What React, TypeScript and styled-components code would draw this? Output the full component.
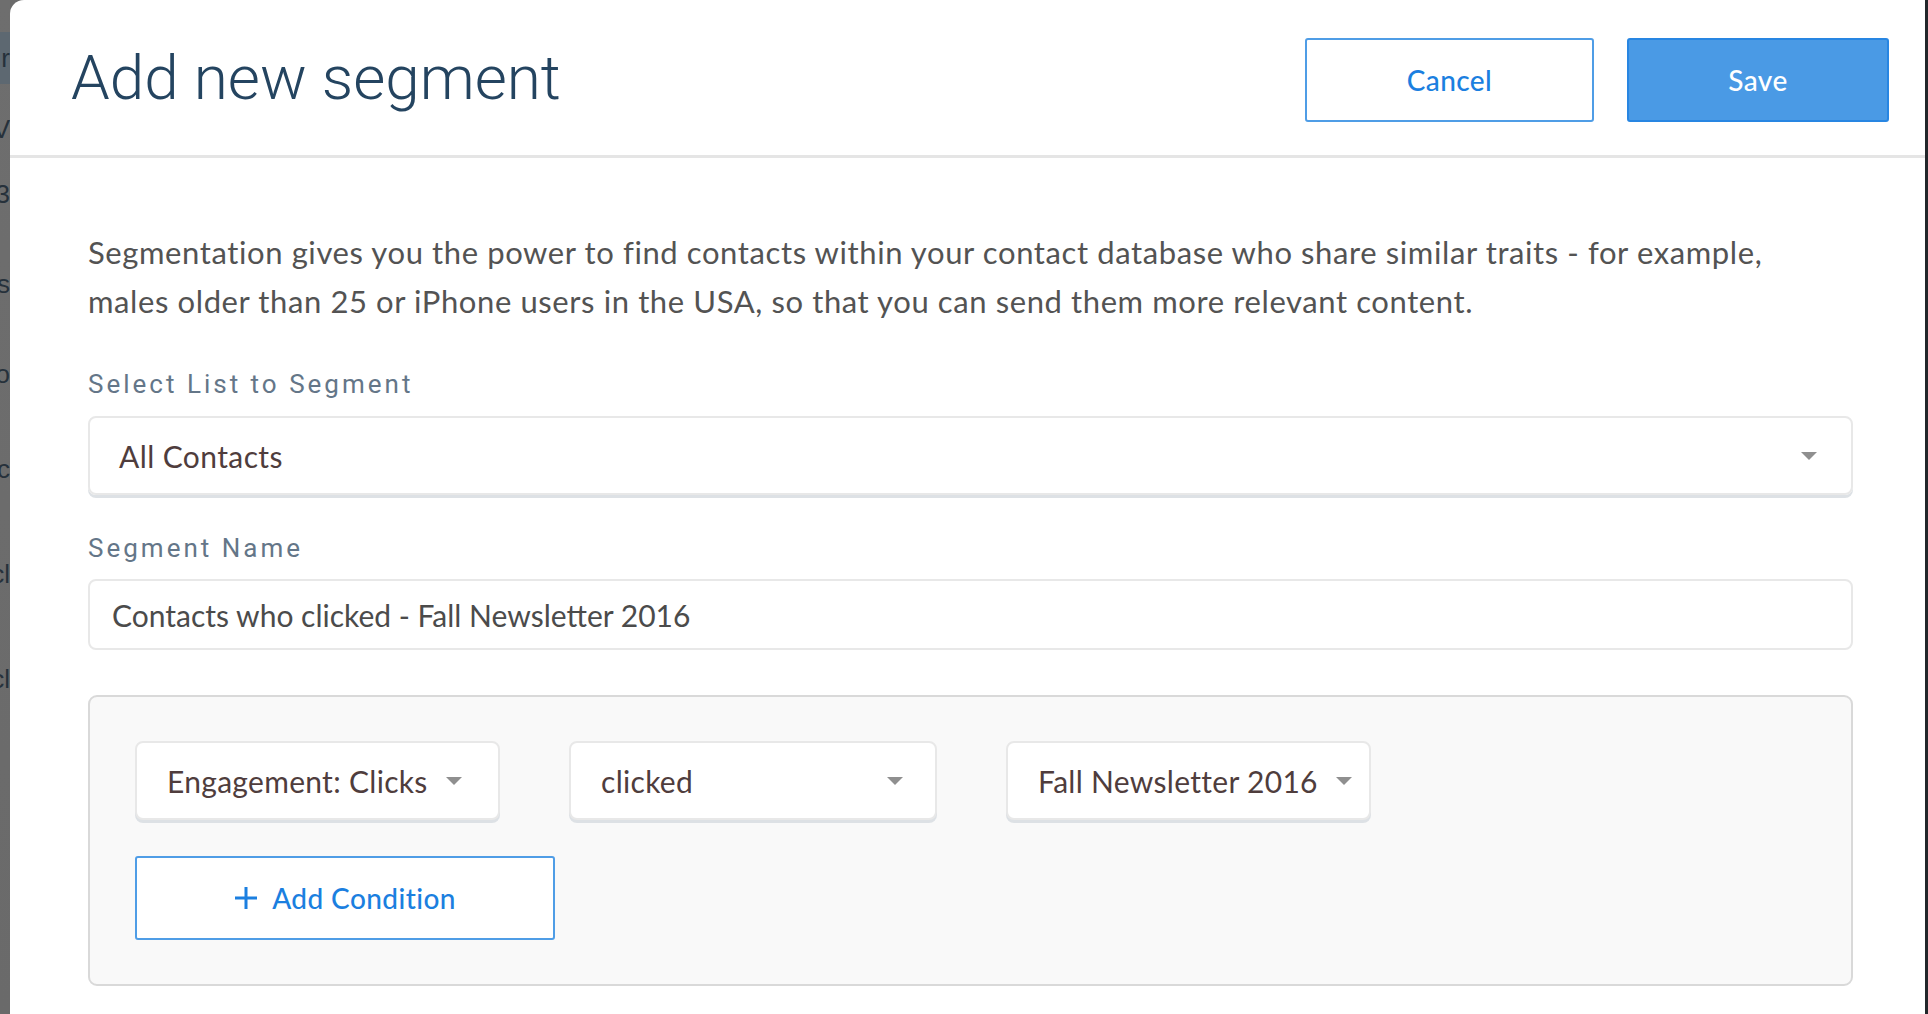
import styled, { createGlobalStyle } from "styled-components";

const GlobalStyle = createGlobalStyle`
  html, body {
    margin: 0;
    padding: 0;
    height: 1014px;
    overflow: hidden;
    background: #6b6b6b;
  }
  * {
    box-sizing: border-box;
  }
`;

const Page = styled.div`
  display: flex;
  height: 1014px;
  width: 1928px;
`;

// what shows of the page behind the modal
const Backdrop = styled.div`
  width: 10px;
  flex-shrink: 0;
  overflow: hidden;
  display: flex;
  flex-direction: column;
  background: linear-gradient(#6e6e6e, #6a6a6a);
`;

const BackdropBand = styled.div<{ $h: number; $bg?: string }>`
  height: ${(p) => p.$h}px;
  width: 100%;
  background: ${(p) => p.$bg || "transparent"};
  display: flex;
  justify-content: flex-end;
  align-items: center;
  white-space: nowrap;
  color: #26313b;
  font-family: "Liberation Sans", sans-serif;
  font-size: 26px;
`;

const Modal = styled.div`
  flex: 1;
  background: #ffffff;
  border-top-left-radius: 14px;
  border-right: 3px solid #22262a;
  display: flex;
  flex-direction: column;
`;

const Header = styled.header`
  height: 158px;
  flex-shrink: 0;
  display: flex;
  align-items: center;
  padding: 4px 36px 0 61px;
  border-bottom: 3px solid #e5e5e5;
`;

const Title = styled.h1`
  flex: 1;
  margin: 0 0 4px;
  font-family: Roboto, sans-serif;
  font-weight: 300;
  font-size: 62px;
  color: #244460;
`;

const Button = styled.button<{ $primary?: boolean; $w: number }>`
  width: ${(p) => p.$w}px;
  height: 84px;
  border-radius: 3px;
  font-family: Lato, "Open Sans", sans-serif;
  font-size: 28px;
  font-weight: 500;
  letter-spacing: 0.4px;
  border: 2px solid ${(p) => (p.$primary ? "#2886e2" : "#4f9de6")};
  background: ${(p) => (p.$primary ? "#4a9ae5" : "#ffffff")};
  color: ${(p) => (p.$primary ? "#ffffff" : "#1b7fe0")};
  display: flex;
  align-items: center;
  justify-content: center;
  gap: 14px;
  cursor: pointer;
  & + & {
    margin-left: 33px;
  }
`;

const Body = styled.div`
  padding: 70px 72px 0 78px;
  display: flex;
  flex-direction: column;
`;

const Description = styled.p`
  margin: 0;
  font-family: Lato, "Open Sans", sans-serif;
  font-size: 31px;
  line-height: 49px;
  letter-spacing: 0.6px;
  color: #535353;
`;

const Label = styled.div<{ $top: number }>`
  margin-top: ${(p) => p.$top}px;
  font-family: Roboto, sans-serif;
  font-size: 26px;
  line-height: 36px;
  letter-spacing: 3px;
  color: #647688;
`;

const SelectBox = styled.div`
  margin-top: 14px;
  height: 79px;
  border: 2px solid #e8e8e8;
  border-radius: 8px;
  box-shadow: 0 3px 0 #dde1e5;
  display: flex;
  align-items: center;
  padding: 0 34px 0 29px;
  font-family: Lato, "Open Sans", sans-serif;
  font-size: 30px;
  letter-spacing: 0.4px;
  color: #4f3d3d;
`;

const SelectText = styled.span`
  flex: 1;
`;

const Caret = styled.span`
  width: 0;
  height: 0;
  border-left: 8px solid transparent;
  border-right: 8px solid transparent;
  border-top: 8px solid #8f8f8f;
`;

const TextInput = styled.div`
  margin-top: 13px;
  height: 71px;
  border: 2px solid #e8e8e8;
  border-radius: 8px;
  display: flex;
  align-items: center;
  padding: 0 22px;
  font-family: Lato, "Open Sans", sans-serif;
  font-size: 30px;
  color: #4b4b4b;
`;

const Conditions = styled.div`
  margin-top: 45px;
  height: 291px;
  background: #f9f9f9;
  border: 2px solid #d9d9d9;
  border-radius: 9px;
  padding: 44px 45px;
  display: flex;
  flex-direction: column;
  gap: 36px;
`;

const ConditionRow = styled.div`
  display: flex;
  gap: 69px;
`;

const Dropdown = styled.div<{ $w: number }>`
  width: ${(p) => p.$w}px;
  height: 79px;
  background: #ffffff;
  border: 2px solid #e8e8e8;
  border-radius: 8px;
  box-shadow: 0 3px 0 #dde1e5;
  display: flex;
  align-items: center;
  gap: 18px;
  padding: 0 32px 0 30px;
  font-family: Lato, "Open Sans", sans-serif;
  font-size: 30px;
  letter-spacing: 0.3px;
  color: #4f3d3d;
  white-space: nowrap;
`;

const DropdownText = styled.span<{ $grow?: boolean }>`
  flex: ${(p) => (p.$grow ? 1 : "0 1 auto")};
`;

const PlusIcon = () => (
  <svg width="24" height="24" viewBox="0 0 24 24">
    <path d="M12 1v22M1 12h22" stroke="#1b7fe0" strokeWidth="3" fill="none" />
  </svg>
);

const conditions = [
  { label: "Engagement: Clicks", width: 365, grow: false },
  { label: "clicked", width: 368, grow: true },
  { label: "Fall Newsletter 2016", width: 365, grow: false },
];

export default function App() {
  return (
    <Page>
      <GlobalStyle />
      <Backdrop>
        <BackdropBand $h={32} />
        <BackdropBand $h={52} $bg="#5d6871">r</BackdropBand>
        <BackdropBand $h={90}>V</BackdropBand>
        <BackdropBand $h={40}>2023</BackdropBand>
        <BackdropBand $h={140}>ks</BackdropBand>
        <BackdropBand $h={40}>o</BackdropBand>
        <BackdropBand $h={150}>c</BackdropBand>
        <BackdropBand $h={60}>cl</BackdropBand>
        <BackdropBand $h={150}>cl</BackdropBand>
      </Backdrop>
      <Modal>
        <Header>
          <Title>Add new segment</Title>
          <Button $w={289}>Cancel</Button>
          <Button $w={262} $primary>
            Save
          </Button>
        </Header>
        <Body>
          <Description>
            Segmentation gives you the power to find contacts within your contact database who share similar traits - for example,
            <br />
            males older than 25 or iPhone users in the USA, so that you can send them more relevant content.
          </Description>
          <Label $top={40}>Select List to Segment</Label>
          <SelectBox>
            <SelectText>All Contacts</SelectText>
            <Caret />
          </SelectBox>
          <Label $top={35}>Segment Name</Label>
          <TextInput>Contacts who clicked - Fall Newsletter 2016</TextInput>
          <Conditions>
            <ConditionRow>
              {conditions.map((c) => (
                <Dropdown key={c.label} $w={c.width}>
                  <DropdownText $grow={c.grow}>{c.label}</DropdownText>
                  <Caret />
                </Dropdown>
              ))}
            </ConditionRow>
            <Button $w={420}>
              <PlusIcon />
              Add Condition
            </Button>
          </Conditions>
        </Body>
      </Modal>
    </Page>
  );
}
